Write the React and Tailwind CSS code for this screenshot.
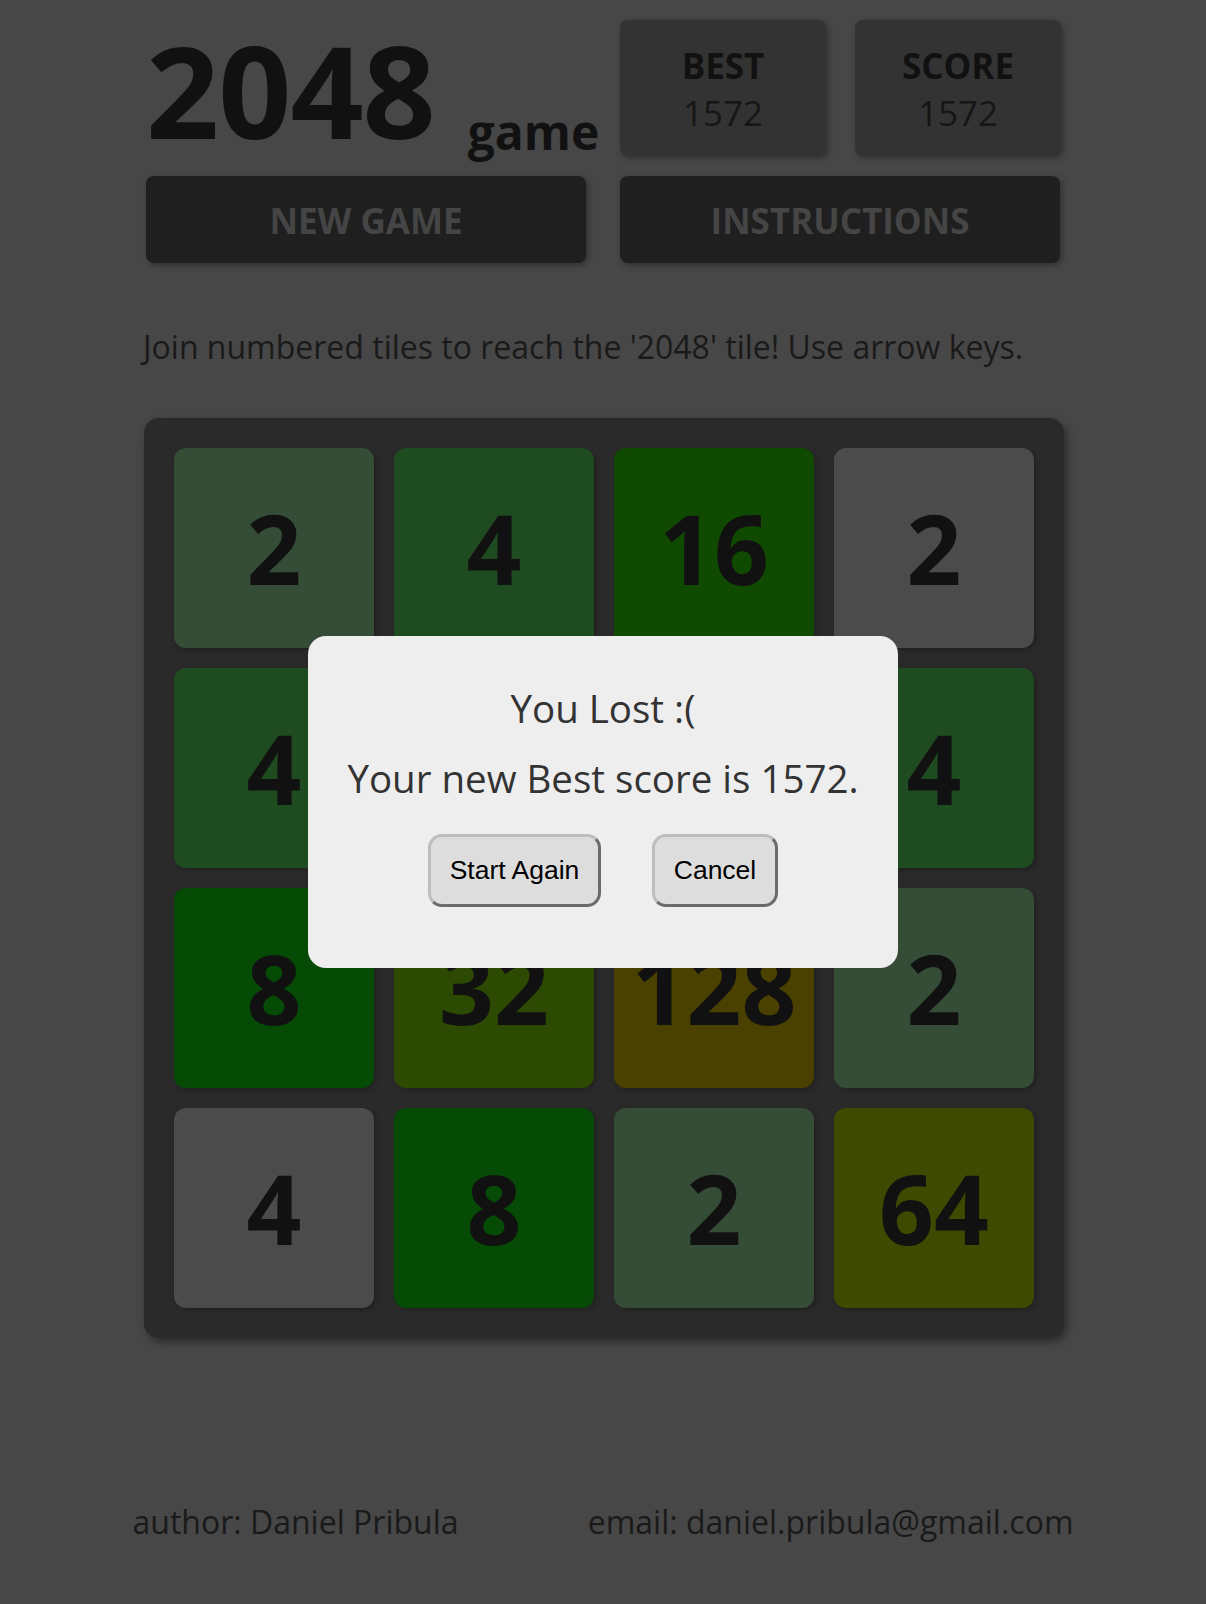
import React from "react";

const tiles = [
  [
    [2, "bg-[#354d36]"],
    [4, "bg-[#1f4b20]"],
    [16, "bg-[#0f4a00]"],
    [2, "bg-[#4b4b4b]"],
  ],
  [
    [4, "bg-[#1f4b20]"],
    [16, "bg-[#0f4a00]"],
    [2, "bg-[#354d36]"],
    [4, "bg-[#1f4b20]"],
  ],
  [
    [8, "bg-[#054a05]"],
    [32, "bg-[#2d4a03]"],
    [128, "bg-[#4a4000]"],
    [2, "bg-[#354d36]"],
  ],
  [
    [4, "bg-[#4b4b4b]"],
    [8, "bg-[#054a05]"],
    [2, "bg-[#354d36]"],
    [64, "bg-[#3d4a00]"],
  ],
];

export default function App() {
  return (
    <div
      className="min-h-screen bg-[#474747] text-[#111111]"
      style={{ fontFamily: '"Open Sans", "Noto Sans", sans-serif' }}
    >
      <div className="mx-auto w-[920px] pt-[20px]">
        {/* header */}
        <div className="flex h-[136px] justify-between">
          <div className="flex items-end pl-[3px]">
            <span className="pb-[2px] text-[128px] font-bold leading-none tracking-[-1px]">
              2048
            </span>
            <span className="ml-[33px] text-[48px] font-bold leading-none">
              game
            </span>
          </div>
          <div className="flex gap-[29px] pr-[2px]">
            {[
              ["BEST", "1572"],
              ["SCORE", "1572"],
            ].map(([l, v]) => (
              <div
                key={l}
                className="flex h-[136px] w-[206px] flex-col items-center rounded-[8px] bg-[#333333] pt-[24px] shadow-[2px_2px_6px_rgba(0,0,0,0.35)]"
              >
                <span className="text-[35px] font-bold leading-[44px]">{l}</span>
                <span className="text-[35px] leading-[50px] text-[#161616]">
                  {v}
                </span>
              </div>
            ))}
          </div>
        </div>

        {/* buttons */}
        <div className="mt-[20px] flex justify-between pl-[3px] pr-[3px]">
          <div className="flex h-[87px] w-[440px] items-center justify-center rounded-[8px] bg-[#1f1f1f] pt-[4px] text-[35px] font-bold text-[#454545] shadow-[2px_2px_6px_rgba(0,0,0,0.35)]">
            NEW GAME
          </div>
          <div className="flex h-[87px] w-[440px] items-center justify-center rounded-[8px] bg-[#1f1f1f] pt-[4px] text-[35px] font-bold text-[#454545] shadow-[2px_2px_6px_rgba(0,0,0,0.35)]">
            INSTRUCTIONS
          </div>
        </div>

        <p className="mt-[62px] text-[32px] leading-[44px] text-[#1a1a1a]">
          Join numbered tiles to reach the '2048' tile! Use arrow keys.
        </p>

        {/* board */}
        <div className="ml-[1px] mt-[49px] grid h-[920px] w-[920px] grid-cols-4 grid-rows-4 gap-[20px] rounded-[15px] bg-[#2a2a2a] p-[30px] shadow-[3px_4px_8px_rgba(0,0,0,0.4)]">
          {tiles.flat().map(([n, bg], i) => (
            <div
              key={i}
              className={`flex items-center justify-center rounded-[12px] text-[96px] font-bold leading-none text-[#111111] shadow-[2px_2px_5px_rgba(0,0,0,0.25)] ${bg}`}
            >
              {n}
            </div>
          ))}
        </div>
      </div>

      {/* footer */}
      <div className="mx-auto mt-[162px] flex w-[941px] justify-between text-[32px] leading-[44px] text-[#1a1a1a]">
        <span>author: Daniel Pribula</span>
        <span>email: daniel.pribula@gmail.com</span>
      </div>

      {/* modal */}
      <div className="fixed left-1/2 top-1/2 flex h-[332px] w-[590px] -translate-x-1/2 -translate-y-1/2 flex-col items-center rounded-[18px] bg-[#eeeeee] pt-[46px] text-[#333333]">
        <div className="text-[38.5px] leading-[52px]">You Lost :(</div>
        <div className="mt-[18px] text-[38.5px] leading-[52px]">
          Your new Best score is 1572.
        </div>
        <div
          className="mt-[30px] flex gap-[51px]"
          style={{ fontFamily: '"Liberation Sans", Arial, sans-serif' }}
        >
          <button className="flex h-[73px] w-[173px] items-center justify-center rounded-[14px] border-[3px] border-b-[#6b6b6b] border-l-[#bdbdbd] border-r-[#6b6b6b] border-t-[#bdbdbd] bg-[#dddddd] text-[26.5px] text-black">
            Start Again
          </button>
          <button className="flex h-[73px] w-[126px] items-center justify-center rounded-[14px] border-[3px] border-b-[#6b6b6b] border-l-[#bdbdbd] border-r-[#6b6b6b] border-t-[#bdbdbd] bg-[#dddddd] text-[26.5px] text-black">
            Cancel
          </button>
        </div>
      </div>
    </div>
  );
}
